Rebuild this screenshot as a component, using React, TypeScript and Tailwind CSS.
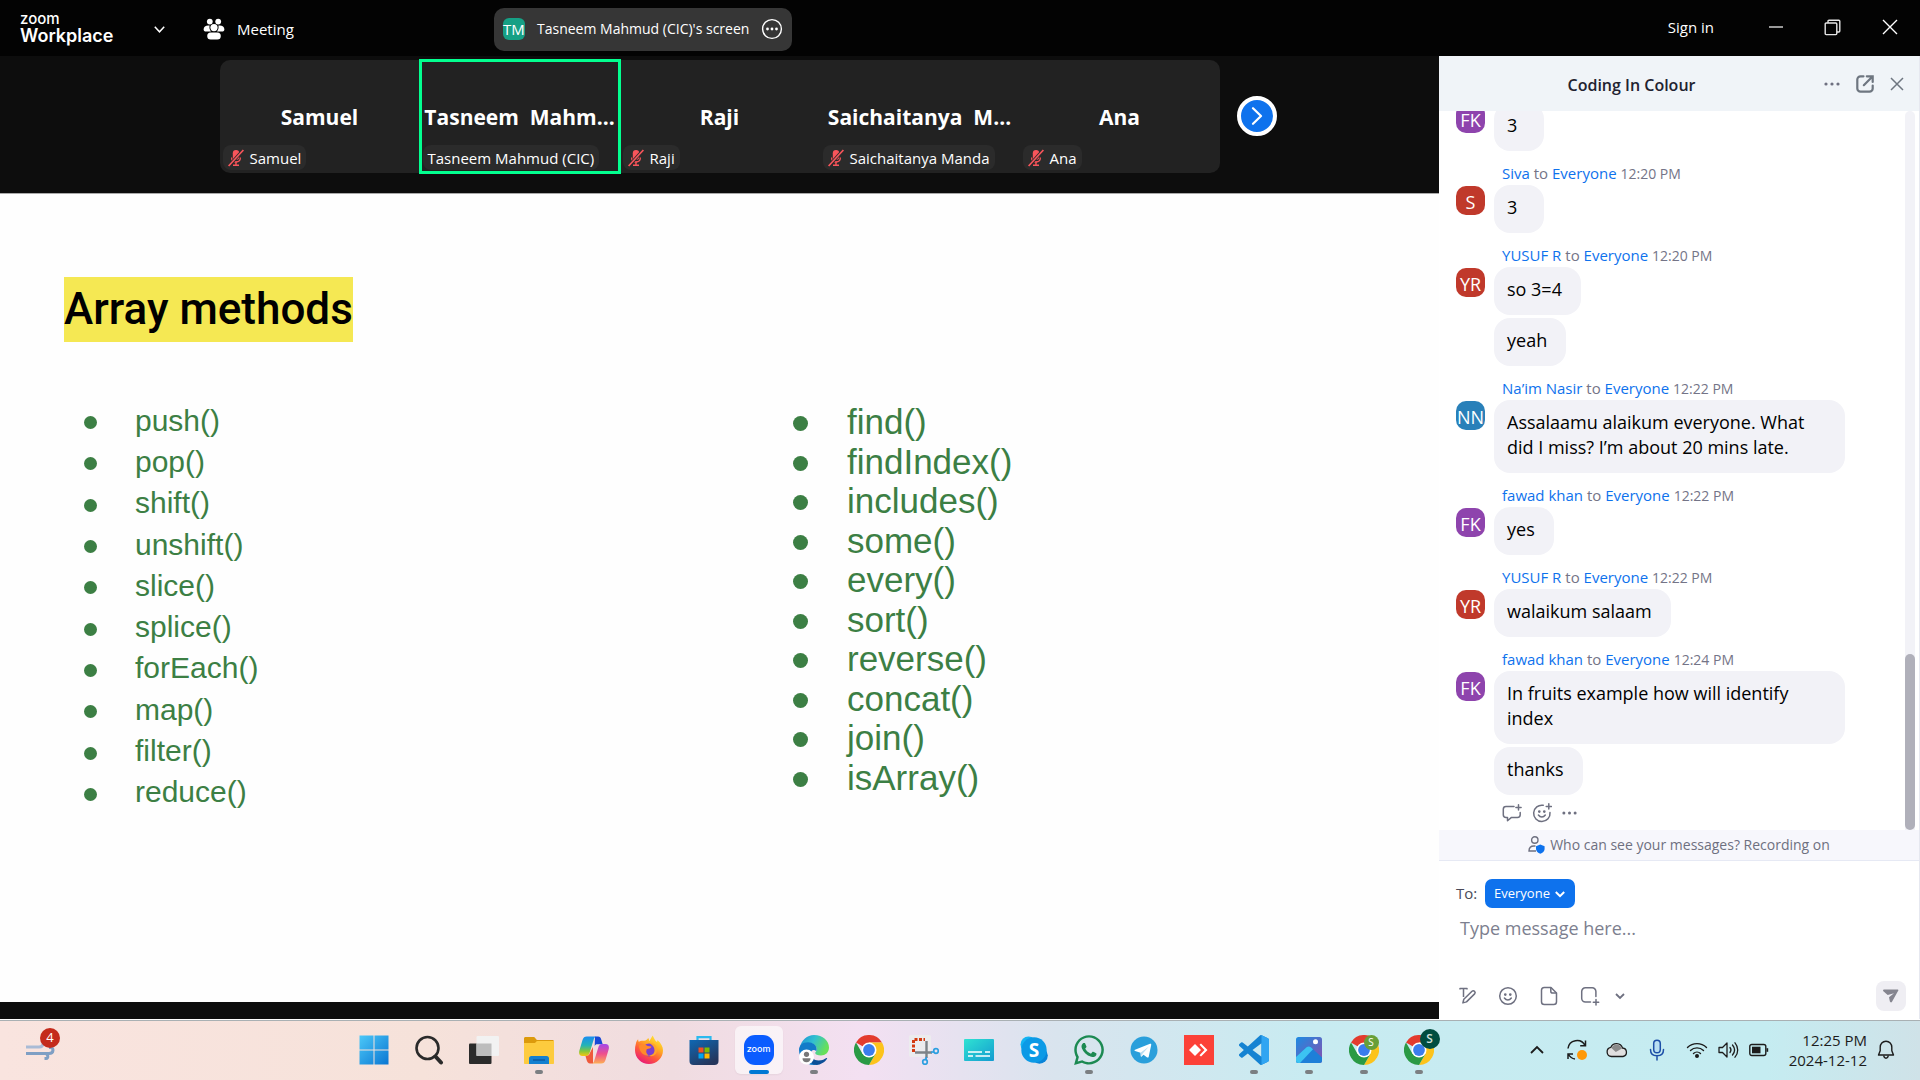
import React from "react";
import { FaWhatsapp } from "react-icons/fa";

const SANS = "font-['Open_Sans','Noto_Sans',sans-serif]";

/* ---------- Top bar ---------- */

function PeopleIcon() {
  return (
    <svg width="22" height="22" viewBox="0 0 22 22" fill="#fff" aria-hidden="true">
      <circle cx="6.8" cy="3.6" r="2.9" />
      <circle cx="15.2" cy="3.6" r="2.9" />
      <path d="M.6 11.4c0-2.200 2-3.800 4.600-3.800h1.400c-.5 2.200 0 4.200 1.400 6H3.200C1.500 13.600.6 12.600.6 11.400z" />
      <path d="M21.4 11.400c0-2.200-2-3.800-4.600-3.800h-1.400c.5 2.200 0 4.200-1.400 6h4.800c1.700 0 2.600-1 2.600-2.200z" />
      <circle cx="11" cy="9.600" r="3.600" />
      <rect x="4.200" y="14.400" width="13.600" height="7" rx="3.500" />
    </svg>
  );
}

function TopBar() {
  return (
    <header className="flex h-14 shrink-0 items-center bg-[#030303] pt-0.5 text-white">
      <div className="flex w-[494px] shrink-0 items-center">
        <button type="button" className="ml-5 flex items-center" aria-label="Zoom Workplace">
          <span className="flex w-[134px] flex-col pb-px text-left font-['Inter',sans-serif]">
            <span className="text-[15px] leading-[15px] font-medium">zoom</span>
            <span className="text-lg leading-5 font-semibold">Workplace</span>
          </span>
          <svg width="11" height="7" viewBox="0 0 11 7" fill="none" stroke="#fff" strokeWidth="1.5" aria-hidden="true">
            <path d="M.8.8l4.700 5 4.700-5" />
          </svg>
        </button>
        <button type="button" className="ml-[38px] flex items-center gap-3 text-[15px] leading-5">
          <PeopleIcon />
          Meeting
        </button>
      </div>
      <div className="flex h-[43px] items-center rounded-[10px] bg-[#363636] px-[9px]">
        <span className="mr-3 flex h-[22px] w-[22px] items-center justify-center rounded-md bg-[#16a085] text-[15px]">TM</span>
        <span className="text-sm whitespace-nowrap">Tasneem Mahmud (CIC)'s screen</span>
        <button type="button" aria-label="More options" className="ml-3">
          <svg width="22" height="22" viewBox="0 0 22 22" fill="#fff">
            <circle cx="11" cy="11" r="9.400" fill="none" stroke="#fff" strokeWidth="1.4" />
            <circle cx="6.500" cy="11" r="1.400" />
            <circle cx="11" cy="11" r="1.400" />
            <circle cx="15.500" cy="11" r="1.400" />
          </svg>
        </button>
      </div>
      <div className="ml-auto flex items-center pr-0.5 pb-1">
        <button type="button" className="mr-[33px] text-[15px] leading-5">Sign in</button>
        <button type="button" aria-label="Minimize" className="flex w-[57px] justify-center">
          <svg width="16" height="16" viewBox="0 0 16 16" stroke="#ccc" strokeWidth="1.5"><path d="M1 8h14" /></svg>
        </button>
        <button type="button" aria-label="Restore" className="flex w-[57px] justify-center">
          <svg width="17" height="17" viewBox="0 0 17 17" fill="none" stroke="#e6e6e6" strokeWidth="1.4">
            <rect x="1.200" y="4" width="11.600" height="11.600" rx="1" />
            <path d="M4 4V2.200c0-.6.4-1 1-1h9.800c.6 0 1 .4 1 1V12c0 .6-.4 1-1 1h-2" />
          </svg>
        </button>
        <button type="button" aria-label="Close" className="flex w-[57px] justify-center">
          <svg width="16" height="16" viewBox="0 0 16 16" stroke="#fff" strokeWidth="1.4"><path d="M1 1l14 14M15 1L1 15" /></svg>
        </button>
      </div>
    </header>
  );
}

/* ---------- Participants ---------- */

const people = [
  { title: "Samuel", label: "Samuel", muted: true },
  { title: "Tasneem  Mahm...", label: "Tasneem Mahmud (CIC)", muted: false },
  { title: "Raji", label: "Raji", muted: true },
  { title: "Saichaitanya  M...", label: "Saichaitanya Manda", muted: true },
  { title: "Ana", label: "Ana", muted: true },
];

function MutedMic() {
  return (
    <svg width="16" height="18" viewBox="0 0 16 18" fill="#f9555b" aria-hidden="true">
      <rect x="4.800" y="1" width="6.400" height="10" rx="3.200" />
      <path d="M3.600 8.500c0 2.700 1.800 4.500 4.400 4.500s4.400-1.800 4.400-4.500" fill="none" stroke="#f9555b" strokeWidth="1.3" />
      <path d="M7.300 12.500h1.400v3H11V17H5v-1.500h2.300z" />
      <path d="M.8 17L15.200 1" stroke="#2b2b2b" strokeWidth="3.2" />
      <path d="M.6 17L15.400 1" stroke="#f9555b" strokeWidth="1.7" />
    </svg>
  );
}

function Gallery() {
  return (
    <section aria-label="Participants" className="grid h-[137px] shrink-0 grid-cols-[1fr_auto_1fr] items-center bg-[#0d0d0d] pb-[17px] text-white">
      <div />
      <ul className="flex h-[113px] rounded-[10px] bg-[#222]">
        {people.map((p) => (
          <li
            key={p.title}
            className={
              "flex w-[200px] flex-col justify-end px-[3px] pb-[3px]" +
              (p.muted ? "" : " outline-[3px] -outline-offset-2 outline-[#02ff8f]")
            }
          >
            <span className="text-center text-[21px] leading-7 font-bold whitespace-pre">{p.title}</span>
            <span className="mt-[14px] flex h-[25px] items-center gap-1.5 self-start rounded-lg bg-[#2b2b2b] px-[5px] pt-0.5 text-[15px] whitespace-nowrap">
              {p.muted && <MutedMic />}
              {p.label}
            </span>
          </li>
        ))}
      </ul>
      <button type="button" aria-label="Next participants" className="ml-[17px] flex h-10 w-10 items-center justify-center rounded-full border-4 border-white bg-[#0e72ed]">
        <svg width="12" height="18" viewBox="0 0 12 18" fill="none" stroke="#fff" strokeWidth="2.2" strokeLinecap="round" strokeLinejoin="round">
          <path d="M2 1.200l8 7.800-8 7.800" />
        </svg>
      </button>
    </section>
  );
}

/* ---------- Shared slide ---------- */

const leftMethods = ["push()", "pop()", "shift()", "unshift()", "slice()", "splice()", "forEach()", "map()", "filter()", "reduce()"];
const rightMethods = ["find()", "findIndex()", "includes()", "some()", "every()", "sort()", "reverse()", "concat()", "join()", "isArray()"];

function Slide() {
  return (
    <section aria-label="Shared screen" className="grow border-t border-[#aaa] bg-[#fefefe] px-16 pt-[83px] font-['Liberation_Sans',sans-serif] text-[#3c7f44]">
      <h1 className="flex">
        <span className="bg-[#f5e853] font-['Roboto',sans-serif] text-[44px] leading-[65px] font-medium text-black">
          Array methods
        </span>
      </h1>
      <div className="mt-[58px] grid grid-cols-[709px_1fr] items-start">
        <ul className="grid h-[413px] grid-rows-10 pl-5 text-3xl leading-10">
          {leftMethods.map((m) => (
            <li key={m} className="flex items-center">
              <span className="mt-1 mr-[38px] h-[13px] w-[13px] rounded-full bg-[#3c7f44]" />
              {m}
            </li>
          ))}
        </ul>
        <ul className="mt-0.5 grid h-[395px] grid-rows-10 pl-5 text-[35px] leading-[39px]">
          {rightMethods.map((m) => (
            <li key={m} className="flex items-center">
              <span className="mt-1 mr-[39px] h-[15px] w-[15px] rounded-full bg-[#3c7f44]" />
              {m}
            </li>
          ))}
        </ul>
      </div>
    </section>
  );
}

/* ---------- Chat ---------- */

const chat = [
  { initials: "FK", color: "bg-[#8e44ad]", lines: ["3"] },
  { from: "Siva", time: "12:20 PM", initials: "S", color: "bg-[#c0392b]", lines: ["3"] },
  { from: "YUSUF R", time: "12:20 PM", initials: "YR", color: "bg-[#c0392b]", lines: ["so 3=4", "yeah"] },
  { from: "Na’im Nasir", time: "12:22 PM", initials: "NN", color: "bg-[#2980b9]", lines: ["Assalaamu alaikum everyone. What did I miss? I’m about 20 mins late."] },
  { from: "fawad khan", time: "12:22 PM", initials: "FK", color: "bg-[#8e44ad]", lines: ["yes"] },
  { from: "YUSUF R", time: "12:22 PM", initials: "YR", color: "bg-[#c0392b]", lines: ["walaikum salaam"] },
  { from: "fawad khan", time: "12:24 PM", initials: "FK", color: "bg-[#8e44ad]", lines: ["In fruits example how will identify index", "thanks"] },
];

function Smile({ plus }: { plus?: boolean }) {
  return (
    <svg width="20" height="20" viewBox="0 0 20 20" fill="none" stroke="#6e7080" strokeWidth="1.5" strokeLinecap="round">
      {plus ? <path d="M11.200 2.300A8.200 8.200 0 1 0 18 9.500" /> : <circle cx="10" cy="10" r="8.300" />}
      <circle cx="7.300" cy="8.600" r=".6" fill="#6e7080" />
      <circle cx="12.300" cy="8.600" r=".6" fill="#6e7080" />
      <path d="M6.400 12c1.900 2.500 5 2.500 6.900 0" />
      {plus && <path d="M16.800 .8v5.200M14.200 3.400h5.200" />}
    </svg>
  );
}

function Dots({ size }: { size: number }) {
  return (
    <svg width={size} height="6" viewBox="0 0 16 6" fill="#6e7080">
      <circle cx="2" cy="3" r="1.600" />
      <circle cx="8" cy="3" r="1.600" />
      <circle cx="14" cy="3" r="1.600" />
    </svg>
  );
}

function ChatPanel() {
  return (
    <aside aria-label="Chat" className="flex w-[481px] shrink-0 flex-col border-r border-[#e6e8f0] bg-white text-black">
      <div className="flex h-[55px] shrink-0 items-center bg-[#f0f4f8]">
        <h2 className="grow pt-0.5 text-center text-base font-semibold text-[#222230]">Coding In Colour</h2>
        <div className="mr-[15px] flex items-center gap-4">
          <button type="button" aria-label="More"><Dots size={16} /></button>
          <button type="button" aria-label="Pop out">
            <svg width="18" height="18" viewBox="0 0 18 18" fill="none" stroke="#6e7680" strokeWidth="2.2" strokeLinecap="round">
              <path d="M7.500 1.300H4.500a3.200 3.200 0 0 0-3.200 3.200v9a3.200 3.200 0 0 0 3.200 3.200h9a3.200 3.200 0 0 0 3.200-3.200v-3" />
              <path d="M7.800 10.200L15.500 2.500M10.800 1.300h5.900v5.600" />
            </svg>
          </button>
          <button type="button" aria-label="Close chat">
            <svg width="14" height="14" viewBox="0 0 14 14" stroke="#6e7680" strokeWidth="1.5"><path d="M1 1l12 12M13 1L1 13" /></svg>
          </button>
        </div>
      </div>

      <div className="flex min-h-0 grow">
        <ol className="flex grow flex-col justify-end overflow-hidden">
          {chat.map((g, i) => (
            <li key={i} className={"shrink-0 pl-[17px]" + (g.from ? " pt-3" : "")}>
              {g.from && (
                <p className="h-5 pl-[46px] text-[15px] leading-5 text-[#747487]">
                  <span className="text-[#0e72ed]">{g.from}</span> to <span className="text-[#0e72ed]">Everyone</span>{" "}
                  <time className="text-sm">{g.time}</time>
                </p>
              )}
              <div className="mt-0.5 flex items-start gap-[9px]">
                <span className={"mt-px flex h-[29px] w-[29px] shrink-0 items-center justify-center rounded-[10px] pt-0.5 text-lg text-white " + g.color}>
                  {g.initials}
                </span>
                <div className="flex flex-col items-start gap-[3px]">
                  {g.lines.map((l) => (
                    <p key={l} className="max-w-[351px] min-w-[50px] rounded-2xl bg-[#f2f2f7] pt-2.5 pr-[19px] pb-[13px] pl-[13px] text-lg leading-[25px]">
                      {l}
                    </p>
                  ))}
                </div>
              </div>
            </li>
          ))}
          <li className="flex h-[35px] shrink-0 items-center gap-2.5 pl-[63px]">
            <button type="button" aria-label="Reply">
              <svg width="20" height="18" viewBox="0 0 20 18" fill="none" stroke="#6e7080" strokeWidth="1.5" strokeLinecap="round" strokeLinejoin="round">
                <path d="M12 2.500H4A2.700 2.700 0 0 0 1.300 5.200v5.500A2.700 2.700 0 0 0 4 13.400h1.500v3.400l4-3.400h6a2.700 2.700 0 0 0 2.700-2.700V8.500" />
                <path d="M16.500.8v5.200M13.900 3.400h5.200" />
              </svg>
            </button>
            <button type="button" aria-label="React"><Smile plus /></button>
            <button type="button" aria-label="More actions"><Dots size={15} /></button>
          </li>
        </ol>
        <div className="mr-1 flex w-2.5 flex-col justify-end rounded-t-full bg-[#f2f2f7]">
          <div className="h-[176px] rounded-full bg-[#b0b0ba]" />
        </div>
      </div>

      <div className="flex h-[31px] shrink-0 items-center justify-center gap-[5px] border-b border-[#e6e9f4] bg-[#f7f7fc] text-[#6e7080]">
        <svg width="17" height="18" viewBox="0 0 17 18" fill="none" stroke="#6e7080" strokeWidth="1.4" aria-hidden="true">
          <circle cx="6.800" cy="4" r="3.200" />
          <path d="M8 15H1c0-3 1.800-5 5-5h1.500" />
          <path d="M12.300 8.500l4.300 1.800v2.700c0 2.300-2 4-4.300 4.800-2.300-.8-4.300-2.500-4.300-4.800v-2.700z" fill="#0e72ed" stroke="none" />
        </svg>
        <span className="text-sm whitespace-nowrap">Who can see your messages? Recording on</span>
      </div>

      <form className="flex h-[158px] shrink-0 flex-col pt-[18px]">
        <div className="flex items-center pl-[17px]">
          <label htmlFor="recipient" className="w-[29px] text-[15px] text-[#4a4a58]">To:</label>
          <div className="relative">
            <select id="recipient" className="block h-[29px] w-[90px] appearance-none rounded-[7px] bg-[#0e72ed] pl-[9px] text-[13px] text-white">
              <option>Everyone</option>
            </select>
            <svg className="pointer-events-none absolute top-3 right-2.5" width="10" height="7" viewBox="0 0 10 7" fill="none" stroke="#fff" strokeWidth="2">
              <path d="M.8 1L5 5.200 9.200 1" />
            </svg>
          </div>
        </div>
        <textarea
          aria-label="Message"
          placeholder="Type message here..."
          className="block min-h-0 w-full grow resize-none pt-1.5 pl-[21px] text-lg leading-7 placeholder:text-[#7d7f8f]"
        />
        <div className="flex h-[46px] shrink-0 items-center pr-[13px] pl-[19px]">
          <button type="button" aria-label="Format" className="mr-5">
            <svg width="20" height="20" viewBox="0 0 20 20" fill="none" stroke="#6e7080" strokeWidth="1.5" strokeLinejoin="round">
              <path d="M2 3.600V2.500h7v1.100M5.500 2.500v8.500" />
              <path d="M5.800 13.300l8.200-8c1.700-1.500 4.200.8 2.600 2.600l-8.100 8-3.600 1z" />
            </svg>
          </button>
          <button type="button" aria-label="Emoji" className="mr-[22px]"><Smile /></button>
          <button type="button" aria-label="Attach file" className="mr-[22px]">
            <svg width="18" height="20" viewBox="0 0 18 20" fill="none" stroke="#6e7080" strokeWidth="1.5" strokeLinejoin="round">
              <path d="M11 1.500H4.300A2.800 2.800 0 0 0 1.500 4.300v11.400a2.800 2.800 0 0 0 2.800 2.800h9.400a2.800 2.800 0 0 0 2.800-2.800V7z" />
              <path d="M10.800 1.800v3.400c0 1.100.8 1.900 1.900 1.900h3.600" />
            </svg>
          </button>
          <button type="button" aria-label="Screenshot" className="mr-[15px]">
            <svg width="20" height="20" viewBox="0 0 20 20" fill="none" stroke="#6e7080" strokeWidth="1.5" strokeLinecap="round">
              <path d="M10.500 16H5.400A3.700 3.700 0 0 1 1.700 12.300V5.500a3.700 3.700 0 0 1 3.700-3.700h6.800a3.700 3.700 0 0 1 3.700 3.700v5" />
              <path d="M16 13.500v5.400M13.300 16.200h5.400" />
            </svg>
          </button>
          <button type="button" aria-label="More tools">
            <svg width="10" height="7" viewBox="0 0 10 7" fill="none" stroke="#6e7080" strokeWidth="1.8"><path d="M1 1l4 4 4-4" /></svg>
          </button>
          <button type="submit" aria-label="Send" className="ml-auto flex h-[30px] w-[30px] items-center justify-center rounded-lg bg-[#efeef3]">
            <svg width="16" height="14" viewBox="0 0 16 14" fill="#85858f">
              <path d="M1 .5h13.700c.6 0 .9.6.6 1.100L9 12.800c-.5.900-1.800.8-2.100-.2L6 8.200l5-4-6.300 1.900L.4 2.200C-.3 1.500.1.500 1 .5z" />
            </svg>
          </button>
        </div>
      </form>
    </aside>
  );
}

/* ---------- Taskbar icons ---------- */

function Start() {
  return (
    <svg width="30" height="30" viewBox="0 0 30 30">
      <defs>
        <linearGradient id="win" x1="0" y1="0" x2="1" y2="1" gradientUnits="objectBoundingBox">
          <stop offset="0" stopColor="#4cc8f8" /><stop offset="1" stopColor="#0a76d2" />
        </linearGradient>
      </defs>
      <path d="M.5.5h14v14h-14zM15.500.5h14v14h-14zM.5 15.500h14v14h-14zM15.500 15.500h14v14h-14z" fill="url(#win)" />
    </svg>
  );
}

function Search() {
  return (
    <svg width="30" height="30" viewBox="0 0 30 30" fill="none" stroke="#2a2a2a">
      <circle cx="13.500" cy="13" r="11" strokeWidth="2.6" />
      <path d="M21.500 21.500l5.500 6" strokeWidth="4" strokeLinecap="round" />
    </svg>
  );
}

function TaskView() {
  return (
    <svg width="30" height="30" viewBox="0 0 30 30">
      <rect x="0" y="8.500" width="22.500" height="20.500" rx="1" fill="#2b2b2b" />
      <rect x="7.500" y="1" width="22.500" height="20" rx="1" fill="#f2f2f2" />
      <path d="M7.500 8.500h15V21h-15z" fill="#bdbdbd" />
    </svg>
  );
}

function Explorer() {
  return (
    <svg width="30" height="30" viewBox="0 0 30 30">
      <path d="M0 3.500C0 2.500.7 2 1.500 2h8.300c1.700 0 1.900 3 3.600 3h15.100c.8 0 1.500.6 1.500 1.400V12H0z" fill="#dc9a0c" />
      <path d="M0 8h10.500c1.200 0 1.600-2 3-2H30v22c0 .6-.4 1-1 1H1c-.6 0-1-.4-1-1z" fill="#fdcb3e" />
      <path d="M5 29v-5.500C5 22 5.900 21 7.400 21h15.200c1.500 0 2.400 1 2.400 2.500V29z" fill="#1480d0" />
      <path d="M9 25h12" stroke="#0b4f95" strokeWidth="1.2" />
    </svg>
  );
}

function Copilot() {
  return (
    <svg width="30" height="30" viewBox="0 0 30 30">
      <defs>
        <linearGradient id="cpA" x1="0" y1="0" x2="0" y2="1">
          <stop offset="0" stopColor="#1a8df0" /><stop offset=".45" stopColor="#23b3b8" /><stop offset=".75" stopColor="#83c63c" /><stop offset="1" stopColor="#f8c70e" />
        </linearGradient>
        <linearGradient id="cpB" x1="0" y1="0" x2="0" y2="1">
          <stop offset="0" stopColor="#a348ea" /><stop offset=".5" stopColor="#ee4f8d" /><stop offset="1" stopColor="#fdae55" />
        </linearGradient>
      </defs>
      <path d="M16 1.500h3c1.800 0 2.700 1.200 3.300 3.200l1.400 4.600h-5.500c-1.300 0-2 .6-2.500 2z" fill="#1849d6" />
      <path d="M7.800 1.500h9.700c-1.700 0-2.300 1.400-2.800 3l-4 13c-.7 2.300-1.600 3.500-3.700 3.500H3.600C.3 21-.3 18.600.3 15.700L3.500 5c.8-2.400 2-3.500 4.300-3.500z" fill="url(#cpA)" />
      <path d="M14 28.500h-3c-1.800 0-2.700-1.200-3.300-3.200L6.500 21c2.600 0 3.800-1 4.500-3.300l3-5.700z" fill="#ef5a3c" />
      <path d="M22.200 28.500h-9.700c1.700 0 2.300-1.400 2.800-3l4-13c.7-2.300 1.600-3.500 3.700-3.500h3.400c3.300 0 3.900 2.400 3.300 5.300L26.500 25c-.8 2.400-2 3.500-4.300 3.500z" fill="url(#cpB)" />
    </svg>
  );
}

function Firefox() {
  return (
    <svg width="30" height="30" viewBox="0 0 30 30">
      <defs>
        <linearGradient id="ff" x1=".85" y1="0" x2=".25" y2="1">
          <stop offset="0" stopColor="#fff03d" /><stop offset=".35" stopColor="#ffb022" /><stop offset=".65" stopColor="#ff5a3a" /><stop offset="1" stopColor="#e7147d" />
        </linearGradient>
      </defs>
      <path d="M1.800 9c.3-2 1.200-3.800 2.300-4.800 0 1.200.3 2 .8 2.700C6.300 5.800 8 5.600 9.800 5.800 12 6 13.500 4 14.300 3c.6.9 1 2.100 1 3.200 1.200-1.700 2-3.700 3.300-5.700 1.700 2.700 2.200 5 4.300 6.500.5-.5.6-1.200.5-2 3.500 3 5.600 6.600 5.600 10.300C29 23.300 22.700 29 15 29S1 23.200 1 15.300c0-2.300.2-4.500.8-6.300z" fill="url(#ff)" />
      <circle cx="15" cy="15" r="6.500" fill="#7a3fd0" />
      <path d="M5 10.500c3.500-2 7.500-.8 8.500.6l4 .5c-.5 2-2.800 2.300-4.800 2.600-1 2.800-.5 4.400 2.300 6.300-5 1-10-3.600-10-10z" fill="#ff8a2a" />
      <path d="M16 8.500c4-1 7 2.500 7 6.500 0 5-5 7.500-8.500 5.500 4 0 6-2.500 6-5.300C20.500 12 18.500 10 16 8.500z" fill="#ffa52a" />
    </svg>
  );
}

function Store() {
  return (
    <svg width="30" height="30" viewBox="0 0 30 30">
      <defs>
        <linearGradient id="st" x1="0" y1="0" x2=".6" y2="1"><stop offset="0" stopColor="#0f68b4" /><stop offset="1" stopColor="#25365c" /></linearGradient>
      </defs>
      <path d="M8.500 7V2.200h13V7" fill="none" stroke="#2cb9ee" strokeWidth="2.2" />
      <path d="M.5 5h29v21a4 4 0 0 1-4 4h-21a4 4 0 0 1-4-4z" fill="url(#st)" />
      <path d="M9.500 12.500h5v5h-5z" fill="#f25022" /><path d="M15.500 12.500h5v5h-5z" fill="#7fba00" />
      <path d="M9.500 18.500h5v5h-5z" fill="#00a4ef" /><path d="M15.500 18.500h5v5h-5z" fill="#ffb900" />
    </svg>
  );
}

function ZoomApp() {
  return (
    <span className="flex h-[30px] w-[30px] items-center justify-center rounded-[11px] bg-[#0b5cff] pb-0.5 font-['Inter',sans-serif] text-[9px] leading-none font-medium text-white">
      zoom
    </span>
  );
}

function Edge() {
  return (
    <svg width="30" height="30" viewBox="0 0 30 30">
      <defs>
        <linearGradient id="eg" x1="0" y1="0" x2="1" y2=".4"><stop offset="0" stopColor="#1c8fd6" /><stop offset=".5" stopColor="#32c0d0" /><stop offset="1" stopColor="#67e05a" /></linearGradient>
      </defs>
      <path d="M1 12C2.500 5 8 0 15 0c9 0 15 6 15 12.500 0 5-3.800 8-8 8-3.500 0-5.800-1.200-5.800-2.500 0-.8 1.500-1.300 1.500-3.700C17.700 10.500 14 8 10 8c-4 0-7 1.500-9 4z" fill="url(#eg)" />
      <path d="M0 15C0 10 4 7.300 9 7.300c5 0 8.700 3.200 8.700 7 0 .8-.2 1.500-.5 2C15.500 14 11.700 15 11.500 18.500 11.200 24 16 28 19.500 29.200 9.500 32.500 0 25 0 15z" fill="#127bc8" />
      <path d="M12.500 16c-2.500 4.500 1 9.500 7 9.500 4 0 6-1.500 8-2.500.5-.2.8.2.6.6C25.500 28 20.500 30.500 16 29.800 9.500 28.500 8.500 19 12.500 16z" fill="#0c4f97" />
      <circle cx="7.500" cy="22" r="7.500" fill="#fff" />
      <circle cx="7.500" cy="19.300" r="2.600" fill="#777" />
      <path d="M3.500 23.200h8c0 2.500-1.500 4-4 4s-4-1.500-4-4z" fill="#777" />
    </svg>
  );
}

function ChromeArt() {
  return (
    <>
      <path d="M15 15L2 7.500A15 15 0 0 1 28 7.500H15z" fill="#e33b2e" />
      <path d="M15 7.500h13A15 15 0 0 1 15 30l6.500-11.200z" fill="#fcc31c" />
      <path d="M2 7.500A15 15 0 0 0 15 30l6.500-11.200L15 22 8.500 18.700z" fill="#2a9a45" />
      <circle cx="15" cy="15" r="7.500" fill="#fff" />
      <circle cx="15" cy="15" r="5.900" fill="#3b7ded" />
    </>
  );
}

function Chrome({ badge }: { badge?: "light" | "dark" }) {
  return (
    <span className="relative">
      <svg width="30" height="30" viewBox="0 0 30 30"><ChromeArt /></svg>
      {badge === "light" && (
        <span className="absolute top-0 left-[15px] flex h-[15px] w-[15px] items-center justify-center rounded-full bg-[#689f38] text-[10px] leading-none text-white">S</span>
      )}
      {badge === "dark" && (
        <span className="absolute -top-1.5 left-4 flex h-5 w-5 items-center justify-center rounded-full bg-[#004d40] text-xs leading-none font-semibold text-[#cfe0dc]">S</span>
      )}
    </span>
  );
}

function Snip() {
  return (
    <svg width="30" height="30" viewBox="0 0 30 30">
      <rect x="0" y="0" width="22" height="22" rx="2" fill="#ececee" />
      <path d="M4.500 17V4.500H16" fill="none" stroke="#d43a10" strokeWidth="3" strokeDasharray="3 1.5" />
      <path d="M17.500 6v17M6 17.500h17" stroke="#7d8388" strokeWidth="2.4" />
      <circle cx="16" cy="27" r="2.300" fill="none" stroke="#2c9fe0" strokeWidth="1.7" />
      <circle cx="27" cy="16" r="2.300" fill="none" stroke="#2c9fe0" strokeWidth="1.7" />
      <path d="M17.500 22l-1 3M22 17.500l3-1" stroke="#2c9fe0" strokeWidth="1.7" />
    </svg>
  );
}

function Captions() {
  return (
    <svg width="30" height="30" viewBox="0 0 30 30">
      <defs>
        <linearGradient id="cc" x1="0" y1="0" x2="1" y2="1"><stop offset="0" stopColor="#2fe3d2" /><stop offset="1" stopColor="#149bd0" /></linearGradient>
      </defs>
      <rect x="0" y="4" width="30" height="22" rx="1" fill="url(#cc)" />
      <path d="M4 17h14M21 17h5M4 21h5M11.500 21H26" stroke="#fff" strokeWidth="1.7" />
    </svg>
  );
}

function Skype() {
  return (
    <svg width="30" height="30" viewBox="0 0 30 30">
      <circle cx="9.500" cy="9.500" r="8" fill="#14b4f2" />
      <circle cx="20.500" cy="20.500" r="8.300" fill="#0a84d8" />
      <circle cx="15" cy="15" r="12.700" fill="#0c9ae6" />
      <text x="15" y="21.500" textAnchor="middle" fill="#fff" fontFamily="Open Sans" fontWeight="700" fontSize="19">S</text>
    </svg>
  );
}

function Telegram() {
  return (
    <svg width="30" height="30" viewBox="0 0 30 30">
      <circle cx="15" cy="15" r="13.500" fill="#2a9fdb" />
      <path d="M6 14.800l15-6c.8-.3 1.400.2 1.200 1.200l-2.500 11.700c-.2.9-.8 1.100-1.500.7L14.500 19.700l-1.800 1.800c-.4.4-1 .2-1-.4l-.2-3.400-5.400-1.700c-.8-.3-.8-.9-.1-1.200z" fill="#fff" />
      <path d="M11.500 17.700l8.200-6-6.200 7-.8 2.600z" fill="#b9dcf0" />
    </svg>
  );
}

function AnyDesk() {
  return (
    <svg width="30" height="30" viewBox="0 0 30 30">
      <path d="M0 0h30v30H0z" fill="#fc4138" />
      <path d="M11 9l6 6-6 6-6-6z" fill="#fff" />
      <path d="M15.500 9.800L17 8.500l6.500 6.500-6.500 6.500-1.500-1.300 5-5.200z" fill="#fff" />
    </svg>
  );
}

function VSCode() {
  return (
    <svg width="30" height="30" viewBox="0 0 24 24">
      <path fill="#1583d2" d="M23.150 2.587L18.210.21a1.494 1.494 0 0 0-1.705.29l-9.460 8.630-4.120-3.128a.999.999 0 0 0-1.276.057L.327 7.261A1 1 0 0 0 .326 8.740L3.899 12 .326 15.260a1 1 0 0 0 .001 1.479L1.650 17.940a.999.999 0 0 0 1.276.057l4.120-3.128 9.460 8.630a1.492 1.492 0 0 0 1.704.29l4.942-2.377A1.500 1.500 0 0 0 24 20.060V3.939a1.500 1.500 0 0 0-.85-1.352zm-5.146 14.861L10.826 12l7.178-5.448v10.896z" />
      <path fill="#30a5f2" d="M18 .12l5.150 2.467A1.500 1.500 0 0 1 24 3.939V20.060a1.500 1.500 0 0 1-.85 1.352L18 23.880z" />
    </svg>
  );
}

function Photos() {
  return (
    <svg width="30" height="30" viewBox="0 0 30 30">
      <defs>
        <linearGradient id="ph" x1="0" y1="0" x2="1" y2="1"><stop offset="0" stopColor="#1c8be2" /><stop offset="1" stopColor="#8a4fae" /></linearGradient>
      </defs>
      <rect x="2" y="2" width="26" height="26" rx="2.500" fill="url(#ph)" />
      <path d="M2 22L12.500 12.300c1.400-1.200 3-1.200 4.400 0L28 22.500v3a2.500 2.500 0 0 1-2.500 2.500h-21A2.500 2.500 0 0 1 2 25.500z" fill="#1e7fd8" />
      <path d="M2 22l10.500-9.700c1.400-1.200 3-1.200 4.400 0l2.100 2L6 28H4.500A2.500 2.500 0 0 1 2 25.500z" fill="#3cc3f2" />
      <circle cx="21.500" cy="6.700" r="2.500" fill="#fff" />
    </svg>
  );
}

type TaskbarApp = { name: string; icon: React.ReactNode; state?: "open" | "active" };

const apps: TaskbarApp[] = [
  { name: "Start", icon: <Start /> },
  { name: "Search", icon: <Search /> },
  { name: "Task view", icon: <TaskView /> },
  { name: "File Explorer", icon: <Explorer />, state: "open" },
  { name: "Copilot", icon: <Copilot /> },
  { name: "Firefox", icon: <Firefox /> },
  { name: "Microsoft Store", icon: <Store /> },
  { name: "Zoom", icon: <ZoomApp />, state: "active" },
  { name: "Edge", icon: <Edge />, state: "open" },
  { name: "Chrome", icon: <Chrome /> },
  { name: "Snipping Tool", icon: <Snip /> },
  { name: "Live captions", icon: <Captions /> },
  { name: "Skype", icon: <Skype /> },
  { name: "WhatsApp", icon: <FaWhatsapp size={34} color="#1c8a52" />, state: "open" },
  { name: "Telegram", icon: <Telegram /> },
  { name: "AnyDesk", icon: <AnyDesk /> },
  { name: "Visual Studio Code", icon: <VSCode />, state: "open" },
  { name: "Photos", icon: <Photos />, state: "open" },
  { name: "Chrome profile 1", icon: <Chrome badge="light" />, state: "open" },
  { name: "Chrome profile 2", icon: <Chrome badge="dark" />, state: "open" },
];

function Taskbar() {
  return (
    <footer className="flex h-[60px] shrink-0 items-center border-t border-[#a9b0b3] bg-[linear-gradient(90deg,#f9e4df_0%,#f6e2da_22%,#f0dce0_35%,#f3e0f2_45%,#d9e4ee_55%,#c8ebf1_68%,#c5ecf1_92%,#cfe2e8_100%)] pb-0.5 text-[#1c1c1c]">
      <div className="flex w-[346px] shrink-0 items-center">
        <button type="button" aria-label="Weather, 4 alerts" className="relative ml-[26px]">
          <svg width="30" height="24" viewBox="0 0 30 24" fill="none" stroke="#7f9fc4" strokeLinecap="square">
            <path d="M1 9h12c3 0 4-2 4-4" stroke="#a9bbd6" strokeWidth="3" />
            <path d="M1 15.500h22c5 0 5-6 1.500-6" strokeWidth="3" />
            <path d="M12 15.500h7c3 0 4 5 1 5" strokeWidth="3" />
          </svg>
          <span className="absolute -top-2.5 left-3.5 flex h-5 w-5 items-center justify-center rounded-full bg-[#c42b1c] text-[13px] leading-none text-white">4</span>
        </button>
      </div>
      <nav aria-label="Apps" className="flex">
        {apps.map((a) => (
          <div key={a.name} className="flex w-[55px] shrink-0 justify-center">
            <button
              type="button"
              aria-label={a.name}
              className={
                "relative flex h-12 w-12 items-center justify-center rounded-md" +
                (a.state === "active" ? " bg-white/60 shadow-xs" : "")
              }
            >
              {a.icon}
              {a.state === "open" && <span className="absolute bottom-0 left-5 h-1 w-2 rounded-full bg-[#7b7f82]" />}
              {a.state === "active" && <span className="absolute bottom-0 left-3.5 h-1 w-5 rounded-full bg-[#0078d4]" />}
            </button>
          </div>
        ))}
      </nav>
      <div className="mr-[25px] ml-auto flex items-center">
        <button type="button" aria-label="Show hidden icons" className="flex w-10 justify-center">
          <svg width="14" height="9" viewBox="0 0 14 9" fill="none" stroke="#1c1c1c" strokeWidth="1.8"><path d="M1 8l6-6 6 6" /></svg>
        </button>
        <button type="button" aria-label="Updates" className="flex w-10 justify-center">
          <svg width="22" height="22" viewBox="0 0 22 22" fill="none" stroke="#1c1c1c" strokeWidth="1.5">
            <path d="M2 9.500A9 9 0 0 1 19 6.500M19.500 1.500v5.300h-5.300M9 20a9 9 0 0 1-6.500-4.500M2 20v-5h5" />
            <circle cx="16" cy="16" r="5" fill="#ff9808" stroke="none" />
          </svg>
        </button>
        <button type="button" aria-label="OneDrive" className="flex w-10 justify-center">
          <svg width="22" height="16" viewBox="0 0 22 16">
            <path d="M5.500 14.500A4.600 4.600 0 0 1 4.800 5.400 6.300 6.300 0 0 1 16.500 6a4.300 4.300 0 0 1 .5 8.500z" fill="#e0e0e0" stroke="#1c1c1c" strokeWidth="1.3" />
            <path d="M5.400 6A5.700 5.700 0 0 1 16 6.600L9.800 10z" fill="#8a8a8a" />
          </svg>
        </button>
        <button type="button" aria-label="Microphone" className="flex w-10 justify-center">
          <svg width="16" height="22" viewBox="0 0 16 22" fill="none" stroke="#1d4fa8" strokeWidth="1.5" strokeLinecap="round">
            <rect x="4.700" y="1.200" width="6.600" height="12.500" rx="3.300" fill="#b9dff2" />
            <path d="M1.500 10.500c0 4 2.700 6.300 6.500 6.300s6.500-2.300 6.500-6.300M8 17v4" />
          </svg>
        </button>
        <button type="button" aria-label="Network, volume and battery" className="ml-[9px] flex items-center gap-[10px]">
          <svg width="22" height="16" viewBox="0 0 22 16" fill="none" stroke="#1c1c1c" strokeWidth="1.4" strokeLinecap="round">
            <path d="M1.500 5.500a13.500 13.500 0 0 1 19 0M4.500 8.600a9.200 9.200 0 0 1 13 0M7.500 11.600a5 5 0 0 1 7 0" />
            <circle cx="11" cy="14" r="1.300" fill="#1c1c1c" />
          </svg>
          <svg width="21" height="18" viewBox="0 0 21 18" fill="none" stroke="#1c1c1c" strokeWidth="1.3" strokeLinecap="round" strokeLinejoin="round">
            <path d="M1 6.500h3.500L9 2v14l-4.500-4.500H1z" />
            <path d="M12 6.500c1.200 1.500 1.200 3.500 0 5M14.500 4c2.500 3 2.500 7 0 10M17 1.800c3.600 4.200 3.600 10.200 0 14.400" />
          </svg>
          <svg width="20" height="14" viewBox="0 0 20 14" fill="none" stroke="#1c1c1c" strokeWidth="1.4">
            <rect x=".8" y="1.500" width="16" height="11" rx="2" />
            <rect x="3" y="3.700" width="8.500" height="6.600" fill="#1c1c1c" stroke="none" />
            <path d="M17.500 5.200h1.700v3.600h-1.700z" fill="#1c1c1c" stroke="none" />
          </svg>
        </button>
        <button type="button" className="ml-5 text-right text-[15px] leading-5">
          <time className="block">12:25 PM</time>
          <time className="block">2024-12-12</time>
        </button>
        <button type="button" aria-label="Notifications" className="ml-[10px]">
          <svg width="18" height="20" viewBox="0 0 18 20" fill="none" stroke="#1c1c1c" strokeWidth="1.4" strokeLinejoin="round">
            <path d="M9 1.200c-3.500 0-5.800 2.600-5.800 6v3.600L1.500 15h15l-1.700-4.200V7.200c0-3.400-2.300-6-5.800-6z" />
            <path d="M6.700 15.500c.3 1.900 1.100 2.700 2.300 2.700s2-.8 2.300-2.700" />
          </svg>
        </button>
      </div>
    </footer>
  );
}

export default function App() {
  return (
    <div className={"flex h-screen flex-col overflow-hidden " + SANS}>
      <TopBar />
      <main className="flex min-h-0 grow border-b border-white">
        <div className="flex min-w-0 grow flex-col">
          <Gallery />
          <Slide />
          <div className="h-[17px] shrink-0 bg-[#0d0d0d]" />
        </div>
        <ChatPanel />
      </main>
      <Taskbar />
    </div>
  );
}
